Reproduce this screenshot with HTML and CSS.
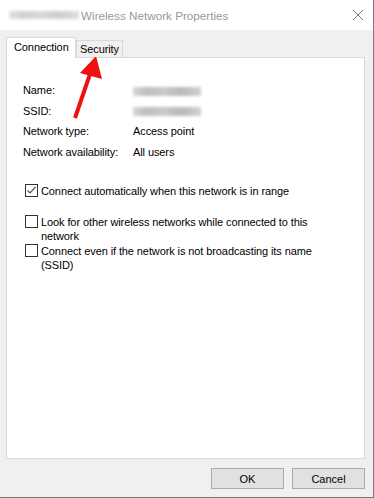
FILE: index.html
```html
<!DOCTYPE html>
<html lang="en">
<head>
  <meta charset="UTF-8">
  <title>Wireless Network Properties</title>
  <link rel="stylesheet" href="styles.css">
</head>
<body>

  <div class="window">
    <div class="titlebar">
      <span class="blur blur-title"></span>
      <span class="title">Wireless Network Properties</span>
      <span class="close">
        <svg width="12" height="12" viewBox="0 0 12 12"><path d="M1 1 L11 11 M11 1 L1 11" stroke="#777" stroke-width="1" fill="none"/></svg>
      </span>
    </div>

    <div class="content">
      <div class="tabs">
        <div class="tab active">Connection</div>
        <div class="tab">Security</div>
      </div>

      <div class="panel">
        <div class="info">
          <div class="label">Name:</div>
          <div class="value"><span class="blur blur-value"></span></div>
          <div class="label">SSID:</div>
          <div class="value"><span class="blur blur-value"></span></div>
          <div class="label">Network type:</div>
          <div class="value">Access point</div>
          <div class="label">Network availability:</div>
          <div class="value">All users</div>
        </div>

        <label class="check first">
          <span class="box checked">
            <svg width="11" height="11" viewBox="0 0 11 11"><path d="M1.5 5.5 L4 8 L9.5 2" stroke="#555" stroke-width="1.2" fill="none"/></svg>
          </span>
          <span>Connect automatically when this network is in range</span>
        </label>
        <label class="check">
          <span class="box"></span>
          <span>Look for other wireless networks while connected to this network</span>
        </label>
        <label class="check">
          <span class="box"></span>
          <span>Connect even if the network is not broadcasting its name (SSID)</span>
        </label>
      </div>

      <div class="buttons">
        <button>OK</button>
        <button>Cancel</button>
      </div>
    </div>

    <!-- red arrow pointing at the Security tab -->
    <svg class="arrow" width="40" height="70" viewBox="0 0 40 70">
      <path d="M9 64 L24 20" stroke="#ee1111" stroke-width="4" fill="none"/>
      <polygon points="30,2 36,25 14,19" fill="#ee1111"/>
    </svg>
  </div>

</body>
</html>
```

FILE: styles.css
```css
* {
  box-sizing: border-box;
}

body {
  margin: 0;
  background: #fff;
  font-family: 'Liberation Sans', Arial, sans-serif;
  font-size: 11px;
  letter-spacing: -0.1px;
  color: #000;
}

.window {
  position: relative;
  width: 374px;
  height: 498px;
  border-right: 1px solid #7a7a7a;
  border-bottom: 1px solid #7a7a7a;
  display: flex;
  flex-direction: column;
}

.titlebar {
  flex: none;
  height: 30px;
  background: #fff;
  display: flex;
  align-items: center;
  padding-left: 9px;
  font-size: 11.7px;
  letter-spacing: 0;
}

.title {
  color: #999;
  margin-left: 2px;
}

.close {
  margin-left: auto;
  margin-right: 9px;
  display: flex;
}

.blur {
  display: inline-block;
  background: linear-gradient(90deg, #d6d6d6, #bdbdc2 20%, #c9c9cc 45%, #b8b8bd 70%, #d0d0d2);
  filter: blur(1.5px);
}

.blur-title {
  width: 70px;
  height: 8px;
  opacity: 0.7;
}

.blur-value {
  width: 68px;
  height: 9px;
  vertical-align: middle;
}

.content {
  flex: 1;
  background: #f0f0f0;
  padding: 7px 8px 0 6px;
  display: flex;
  flex-direction: column;
}

.tabs {
  flex: none;
  display: flex;
  align-items: flex-end;
  height: 20px;
  position: relative;
  z-index: 1;
}

.tab {
  height: 17px;
  line-height: 16px;
  padding: 0 3px 0 3px;
  border: 1px solid #d9d9d9;
  border-bottom: none;
  background: #f0f0f0;
  margin-bottom: 0;
}

.tab.active {
  width: 70px;
  height: 21px;
  line-height: 18px;
  padding: 0 0 0 7px;
  background: #fff;
  margin-bottom: -1px;
}

.panel {
  flex: none;
  height: 402px;
  background: #fff;
  border: 1px solid #d9d9d9;
  padding: 24px 0 0 16px;
}

.info {
  display: grid;
  grid-template-columns: 110px auto;
  row-gap: 4.5px;
  line-height: 16px;
  margin-bottom: 24px;
}

.check {
  display: flex;
  align-items: flex-start;
  gap: 3px;
  line-height: 14px;
  margin: 0 0 1px 2px;
  padding-right: 24px;
}

.check.first {
  margin-bottom: 17px;
}

.box {
  flex: none;
  width: 13px;
  height: 13px;
  border: 1px solid #333;
  background: #fff;
  margin-top: 0;
  display: flex;
}

.buttons {
  display: flex;
  justify-content: flex-end;
  gap: 8px;
  margin-top: 9px;
}

button {
  width: 73px;
  height: 21px;
  background: #e1e1e1;
  border: 1px solid #adadad;
  font-family: 'Liberation Sans', Arial, sans-serif;
  font-size: 11px;
  padding: 0;
}

.arrow {
  position: absolute;
  left: 66px;
  top: 54px;
}
```
